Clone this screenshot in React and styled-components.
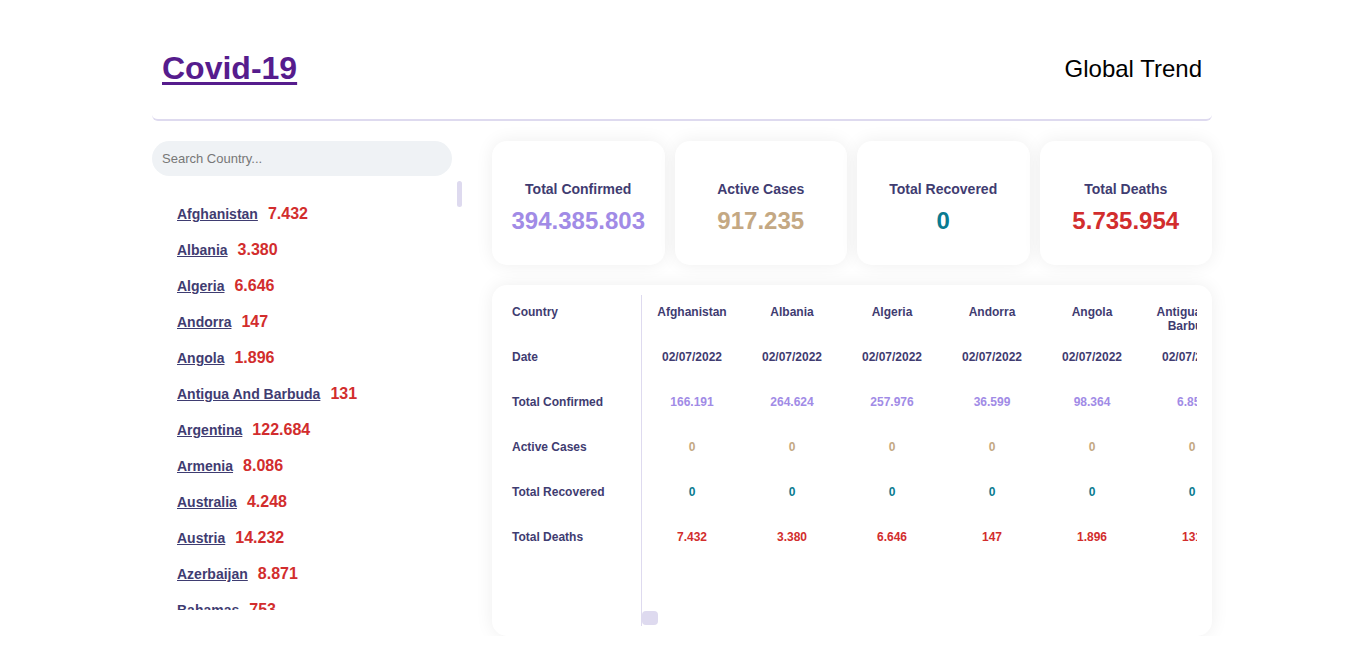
import React from 'react';
import styled, { createGlobalStyle } from 'styled-components';

const GlobalStyle = createGlobalStyle`
  body {
    margin: 0;
    background: #ffffff;
    font-family: "Liberation Sans", Arial, sans-serif;
  }
`;

const NAMES = 'Afghanistan,Albania,Algeria,Andorra,Angola,Antigua And Barbuda,Argentina,Armenia,Australia,Austria,Azerbaijan,Bahamas,Bahrain,Bangladesh'.split(',');

const KNOWN = {
  Afghanistan: [166191, 7432],
  Albania: [264624, 3380],
  Algeria: [257976, 6646],
  Andorra: [36599, 147],
  Angola: [98364, 1896],
  'Antigua And Barbuda': [6857, 131],
  Argentina: [8621875, 122684],
  Armenia: [422574, 8086],
  Australia: [2734566, 4248],
  Austria: [2265438, 14232],
  Azerbaijan: [686743, 8871],
  Bahamas: [33295, 753],
  Bahrain: [608718, 1478],
  Bangladesh: [1953013, 29127],
};

const countries = NAMES.map((name) => ({
  name,
  confirmed: KNOWN[name][0],
  deaths: KNOWN[name][1],
  active: 0,
  recovered: 0,
  date: '02/07/2022',
}));

const fmt = (n) => String(n).replace(/\B(?=(\d{3})+(?!\d))/g, '.');

const colors = {
  ink: '#3f3c71',
  confirmed: '#a18be6',
  active: '#c4a883',
  recovered: '#0a7b90',
  deaths: '#d22d2d',
  line: '#dedaef',
};

const Page = styled.div`
  width: 1060px;
  margin: 0 auto;
  padding-top: 40px;
`;

const Header = styled.header`
  display: flex;
  justify-content: space-between;
  align-items: flex-start;
  padding: 10px 10px 32px;
  border-bottom: 2px solid ${colors.line};
  border-radius: 6px;
`;

const Title = styled.a`
  font-size: 32px;
  font-weight: 700;
  line-height: 37px;
  color: #561c8d;
  text-decoration: underline;
  text-decoration-thickness: 3px;
  text-underline-offset: 3px;
`;

const Trend = styled.h2`
  margin: 0;
  font-size: 24px;
  font-weight: 400;
  line-height: 37px;
  color: #000;
`;

const Body = styled.div`
  display: grid;
  grid-template-columns: 311px minmax(0, 1fr);
  column-gap: 29px;
  margin-top: 20px;
`;

const Sidebar = styled.aside`
  display: flex;
  flex-direction: column;
  min-width: 0;
`;

const Search = styled.input`
  box-sizing: border-box;
  width: 300px;
  height: 35px;
  padding: 0 10px;
  border: none;
  outline: none;
  border-radius: 18px;
  background: #eff2f5;
  font-family: "Liberation Sans", Arial, sans-serif;
  font-size: 13px;
  color: #333;
  &::placeholder {
    color: #777;
  }
`;

const ListFrame = styled.div`
  display: flex;
  height: 429px;
  margin-top: 5px;
`;

const CountryList = styled.ul`
  flex: 1;
  margin: 0;
  padding: 15px 0 0 25px;
  list-style: none;
  overflow: hidden;
`;

/* scrollbars are drawn by hand, the headless page hides native ones */
const VTrack = styled.div`
  width: 6px;
  flex-shrink: 0;
`;

const VThumb = styled.div`
  width: 5px;
  height: 26px;
  border-radius: 3px;
  background: ${colors.line};
`;

const CountryItem = styled.li`
  display: flex;
  align-items: baseline;
  gap: 10px;
  height: 36px;
  line-height: 36px;
`;

const CountryLink = styled.a`
  font-size: 14px;
  font-weight: 700;
  color: ${colors.ink};
  text-decoration: underline;
`;

const CountryDeaths = styled.span`
  font-size: 16px;
  font-weight: 700;
  color: ${colors.deaths};
`;

const Main = styled.main`
  display: flex;
  flex-direction: column;
  gap: 20px;
  min-width: 0;
`;

const Cards = styled.div`
  display: grid;
  grid-template-columns: repeat(4, 1fr);
  gap: 10px;
`;

const Card = styled.div`
  height: 124px;
  box-sizing: border-box;
  padding-top: 40px;
  display: flex;
  flex-direction: column;
  align-items: center;
  gap: 10px;
  background: #fff;
  border-radius: 15px;
  box-shadow: 0 0 18px rgba(0, 0, 0, 0.07);
`;

const CardTitle = styled.div`
  font-size: 14px;
  font-weight: 700;
  line-height: 16px;
  color: ${colors.ink};
`;

const CardValue = styled.div`
  font-size: 24px;
  font-weight: 700;
  line-height: 28px;
  color: ${(p) => p.$color};
`;

const TableCard = styled.section`
  display: flex;
  height: 351px;
  box-sizing: border-box;
  padding: 10px 15px 10px 10px;
  background: #fff;
  border-radius: 15px;
  box-shadow: 0 0 18px rgba(0, 0, 0, 0.07);
`;

const LabelCol = styled.div`
  width: 139px;
  flex-shrink: 0;
  border-right: 1px solid ${colors.line};
`;

const Cell = styled.div`
  box-sizing: border-box;
  height: 45px;
  padding: 10px 10px 0;
  font-size: 12px;
  font-weight: 700;
  line-height: 14px;
  color: ${(p) => p.$color || colors.ink};
  text-align: ${(p) => (p.$left ? 'left' : 'center')};
`;

const Scroller = styled.div`
  flex: 1;
  min-width: 0;
  display: flex;
  flex-direction: column;
`;

const Columns = styled.div`
  flex: 1;
  display: flex;
  overflow: hidden;
`;

const HTrack = styled.div`
  height: 15px;
  flex-shrink: 0;
`;

const HThumb = styled.div`
  width: 16px;
  height: 14px;
  border-radius: 4px;
  background: ${colors.line};
`;

const Column = styled.div`
  width: 100px;
  flex-shrink: 0;
`;

const rows = [
  { label: 'Country', key: 'name' },
  { label: 'Date', key: 'date' },
  { label: 'Total Confirmed', key: 'confirmed', color: colors.confirmed },
  { label: 'Active Cases', key: 'active', color: colors.active },
  { label: 'Total Recovered', key: 'recovered', color: colors.recovered },
  { label: 'Total Deaths', key: 'deaths', color: colors.deaths },
];

const totals = [
  { title: 'Total Confirmed', value: '394.385.803', color: colors.confirmed },
  { title: 'Active Cases', value: '917.235', color: colors.active },
  { title: 'Total Recovered', value: '0', color: colors.recovered },
  { title: 'Total Deaths', value: '5.735.954', color: colors.deaths },
];

export default function App() {
  return (
    <Page>
      <GlobalStyle />
      <Header>
        <Title href="#">Covid-19</Title>
        <Trend>Global Trend</Trend>
      </Header>
      <Body>
        <Sidebar>
          <Search placeholder="Search Country..." />
          <ListFrame>
            <CountryList>
              {countries.map((c) => (
                <CountryItem key={c.name}>
                  <CountryLink href="#">{c.name}</CountryLink>
                  <CountryDeaths>{fmt(c.deaths)}</CountryDeaths>
                </CountryItem>
              ))}
            </CountryList>
            <VTrack>
              <VThumb />
            </VTrack>
          </ListFrame>
        </Sidebar>
        <Main>
          <Cards>
            {totals.map((t) => (
              <Card key={t.title}>
                <CardTitle>{t.title}</CardTitle>
                <CardValue $color={t.color}>{t.value}</CardValue>
              </Card>
            ))}
          </Cards>
          <TableCard>
            <LabelCol>
              {rows.map((r) => (
                <Cell key={r.label} $left>{r.label}</Cell>
              ))}
            </LabelCol>
            <Scroller>
              <Columns>
                {countries.slice(0, 7).map((c) => (
                  <Column key={c.name}>
                    {rows.map((r) => (
                      <Cell key={r.key} $color={r.color}>
                        {typeof c[r.key] === 'number' ? fmt(c[r.key]) : c[r.key]}
                      </Cell>
                    ))}
                  </Column>
                ))}
              </Columns>
              <HTrack>
                <HThumb />
              </HTrack>
            </Scroller>
          </TableCard>
        </Main>
      </Body>
    </Page>
  );
}
